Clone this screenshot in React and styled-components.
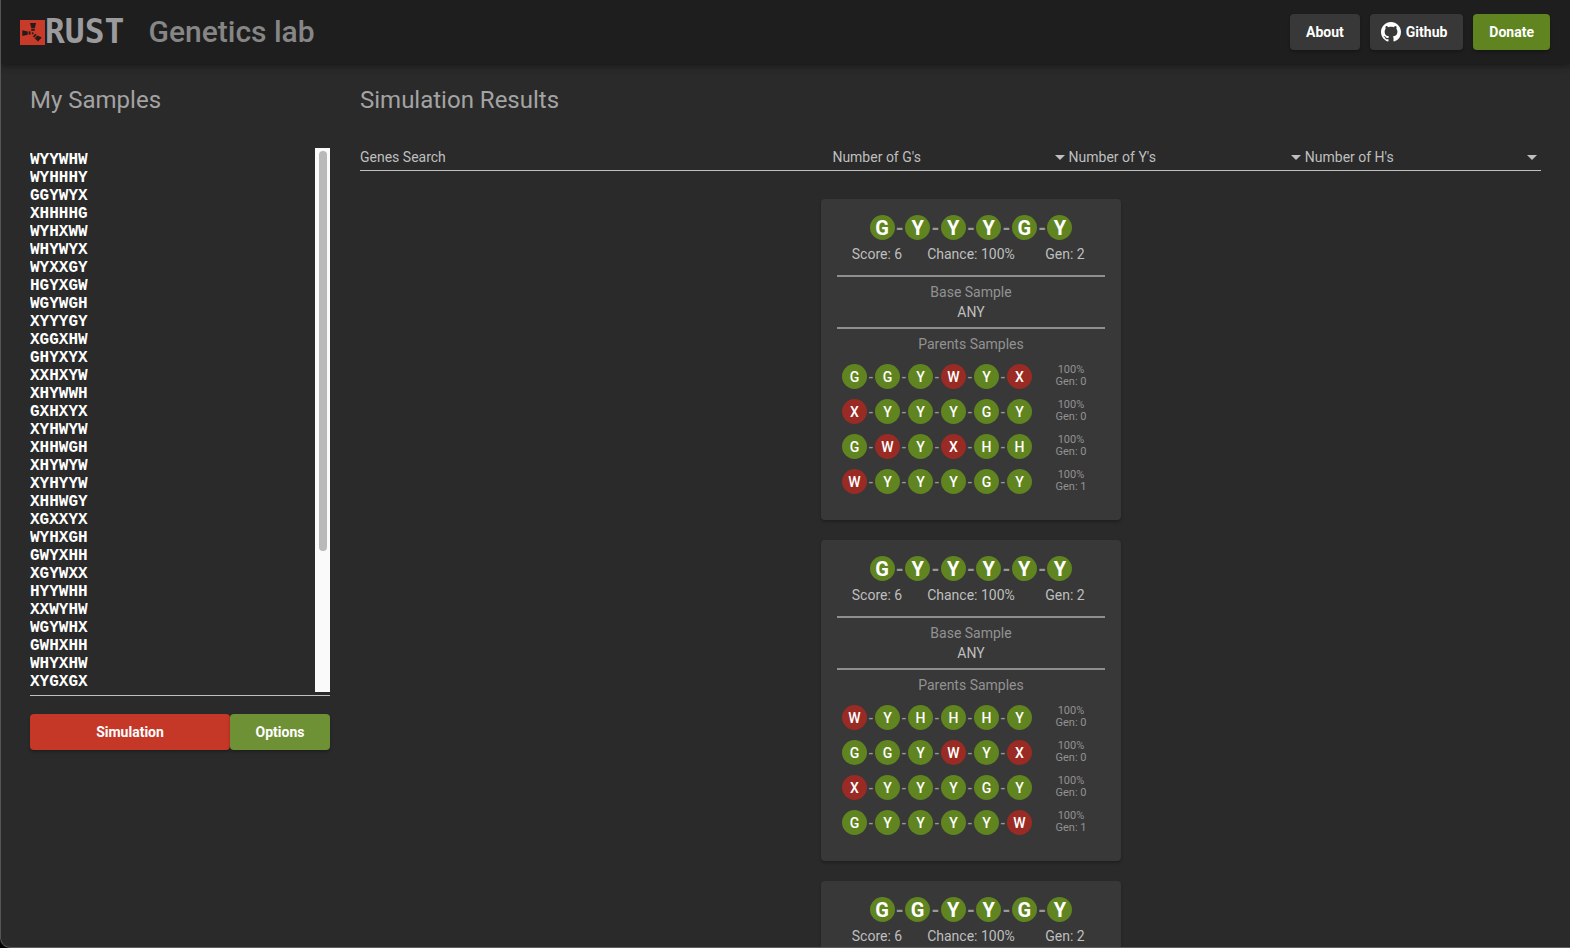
import React from "react";
import styled, { createGlobalStyle } from "styled-components";

const GlobalStyle = createGlobalStyle`
  *, *::before, *::after { box-sizing: border-box; }
  body {
    margin: 0;
    background: #000;
    color: #bfbfbf;
    font: 400 14px/20px Roboto, "Liberation Sans", sans-serif;
    -webkit-font-smoothing: antialiased;
  }
  button, input, select, textarea { font: inherit; color: inherit; }
  h1, h2, h3, p, ul, ol { margin: 0; padding: 0; }
`;

const Frame = styled.div`
  height: 100vh;
  display: flex;
  flex-direction: column;
  overflow: hidden;
  background: #2a2a2a;
  border-left: 1px solid #555;
  border-bottom: 1px solid #5c5c5c;
  border-bottom-left-radius: 10px;
`;

const Header = styled.header`
  flex: none;
  display: flex;
  align-items: center;
  height: 64px;
  padding: 0 20px 0 19px;
  background: #1e1e1e;
  box-shadow: 0 2px 4px -1px rgba(0, 0, 0, 0.2), 0 4px 5px rgba(0, 0, 0, 0.14),
    0 1px 10px rgba(0, 0, 0, 0.12);
  z-index: 1;
`;

const Brand = styled.a`
  display: flex;
  align-items: center;
  text-decoration: none;
`;

const Wordmark = styled.span`
  color: #9b9b9d;
  font: 700 33px/32px "DejaVu Sans Mono", monospace;
`;

const AppTitle = styled.h1`
  margin-left: 24px;
  color: #868686;
  font-size: 30px;
  font-weight: 500;
  line-height: 36px;
`;

const Nav = styled.nav`
  display: flex;
  gap: 10px;
  margin-left: auto;
`;

const tones = {
  dark: "#383838",
  green: "#608420",
  olive: "#6f9136",
  red: "#c53727",
};

const Button = styled.button`
  display: inline-flex;
  align-items: center;
  justify-content: center;
  gap: 5px;
  flex: ${(p) => p.$grow || "none"};
  height: 36px;
  padding: 0 ${(p) => (p.$withIcon ? 16 : p.$grow ? 0 : 16)}px 0 ${(p) => (p.$withIcon ? 11 : p.$grow ? 0 : 16)}px;
  border: 0;
  border-radius: 4px;
  background: ${(p) => tones[p.$tone]};
  color: #fff;
  font-weight: 700;
  text-decoration: none;
  box-shadow: 0 2px 3px rgba(0, 0, 0, 0.25);
  cursor: pointer;
`;

const Page = styled.div`
  flex: 1;
  min-height: 0;
  display: flex;
  gap: 30px;
  padding: 20px 29px 0 29px;
  overflow-y: auto;
  scrollbar-width: none;
`;

const Sidebar = styled.section`
  flex: 0 0 300px;
`;

const Results = styled.section`
  flex: 1;
  min-width: 0;
`;

const Heading = styled.h2`
  margin-bottom: 32px;
  color: #a3a3a3;
  font-size: 24px;
  font-weight: 400;
  line-height: 32px;
`;

const SampleField = styled.div`
  display: flex;
  height: 548px;
  padding-bottom: 3px;
  border-bottom: 1px solid #c0c0c0;
`;

const SampleInput = styled.textarea`
  flex: 1;
  min-width: 0;
  padding: 3px 0 0;
  border: 0;
  outline: 0;
  resize: none;
  background: transparent;
  color: #fff;
  font: 700 16px/18px "Liberation Mono", monospace;
  overflow-y: scroll;
  scrollbar-width: none;
`;

const ScrollTrack = styled.div`
  width: 15px;
  padding: 3px 3px 0 4px;
  background: #fafafa;
`;

const ScrollThumb = styled.div`
  height: 74%;
  border-radius: 4px;
  background: #b9b9b9;
`;

const Actions = styled.div`
  display: flex;
  margin-top: 18px;
`;

const Filters = styled.form`
  display: grid;
  grid-template-columns: 2fr 1fr 1fr 1fr;
`;

const Field = styled.label`
  display: flex;
  align-items: flex-start;
  height: 23px;
  padding-right: 4px;
  border-bottom: 1px solid #c0c0c0;
  color: #bfbfbf;

  svg { flex: none; margin-top: 7px; }
`;

const SearchInput = styled.input`
  width: 100%;
  height: 18px;
  padding: 0;
  border: 0;
  outline: 0;
  background: transparent;
  &::placeholder { color: #bfbfbf; opacity: 1; }
`;

const Select = styled.select`
  flex: 1;
  min-width: 0;
  height: 18px;
  padding: 0;
  margin: 0;
  border: 0;
  outline: 0;
  appearance: none;
  background: transparent;
  line-height: 18px;
`;

const CardList = styled.ul`
  display: flex;
  flex-direction: column;
  align-items: center;
  gap: 20px;
  margin-top: 28px;
  padding: 0 0 20px 41px;
  list-style: none;
`;

const Card = styled.li`
  width: 300px;
  padding: 16px 0 21px;
  border-radius: 4px;
  background: #383838;
  box-shadow: 0 2px 3px rgba(0, 0, 0, 0.25);
  text-align: center;
`;

const GeneRow = styled.div`
  display: flex;
  justify-content: space-between;
  align-items: center;
  width: ${(p) => (p.$large ? 203 : 190)}px;
  margin: ${(p) => (p.$large ? "0 auto" : "0")};
  color: #999;
  font-size: ${(p) => (p.$large ? 20 : 14)}px;
  font-weight: ${(p) => (p.$large ? 700 : 500)};
`;

const Gene = styled.span`
  display: grid;
  place-items: center;
  width: 25px;
  height: 25px;
  border-radius: 50%;
  background: ${(p) => (p.$bad ? "#992b24" : "#608420")};
  color: #fff;
  line-height: 26px;
`;

const Stats = styled.div`
  display: grid;
  grid-template-columns: repeat(3, 1fr);
  margin: 4px 9px 11px;
`;

const Block = styled.div`
  margin: 0 16px;
  padding: 5px 0;
  border-top: 2px solid #8f8f8f;
`;

const Caption = styled.h3`
  color: #929292;
  font-size: 14px;
  font-weight: 400;
  line-height: 20px;
`;

const ParentList = styled.ul`
  display: grid;
  gap: 10px;
  margin-top: 10px;
  list-style: none;
`;

const Parent = styled.li`
  display: flex;
  align-items: flex-start;
  height: 25px;
  padding-left: 5px;
`;

const ParentInfo = styled.p`
  width: 78px;
  color: #929292;
  font-size: 11px;
  line-height: 12px;
`;

const samples = `WYYWHW WYHHHY GGYWYX XHHHHG WYHXWW WHYWYX WYXXGY HGYXGW WGYWGH XYYYGY
XGGXHW GHYXYX XXHXYW XHYWWH GXHXYX XYHWYW XHHWGH XHYWYW XYHYYW XHHWGY XGXXYX WYHXGH
GWYXHH XGYWXX HYYWHH XXWYHW WGYWHX GWHXHH WHYXHW XYGXGX`.split(/\s+/);

const results = [
  { genes: "GYYYGY", parents: ["GGYWYX", "XYYYGY", "GWYXHH", "WYYYGY"] },
  { genes: "GYYYYY", parents: ["WYHHHY", "GGYWYX", "XYYYGY", "GYYYYW"] },
  { genes: "GGYYGY", parents: ["GGYWYX", "XYYYGY", "GWYXHH", "WGYYGY"] },
];

function Genes({ value, large }) {
  return (
    <GeneRow $large={large}>
      {value.split("").map((gene, i) => (
        <React.Fragment key={i}>
          {i > 0 && <span>-</span>}
          <Gene $bad={gene === "W" || gene === "X"}>{gene}</Gene>
        </React.Fragment>
      ))}
    </GeneRow>
  );
}

function ResultCard({ genes, parents }) {
  return (
    <Card>
      <Genes value={genes} large />
      <Stats>
        <span>Score: 6</span>
        <span>Chance: 100%</span>
        <span>Gen: 2</span>
      </Stats>
      <Block>
        <Caption>Base Sample</Caption>
        <p>ANY</p>
      </Block>
      <Block>
        <Caption>Parents Samples</Caption>
        <ParentList>
          {parents.map((parent, i) => (
            <Parent key={parent}>
              <Genes value={parent} />
              <ParentInfo>
                100%
                <br />
                Gen: {i === 3 ? 1 : 0}
              </ParentInfo>
            </Parent>
          ))}
        </ParentList>
      </Block>
    </Card>
  );
}

function RustMark() {
  return (
    <svg width="25" height="25" viewBox="0 0 25 25" aria-hidden="true">
      <path fill="#c93a29" d="M0 0h25v25H0z" />
      <g fill="#241c1b">
        <path d="M10 3h6l-1.2 5.2h-3.4z" />
        <path d="M11.2 9h3.6v1.8h-3.6z" />
        <path d="M2.3 10.2l5.4 1.2v3.4l-5.4 1.2z" />
        <path d="M8.6 11.4h1.9v3.2H8.6z" />
        <path d="M14.6 18.2l3-2.6 4.2 2-3.8 4z" />
        <path d="M12.9 16.4l2.4-2.6 1.4 1.2-2.6 2.5z" />
        <path d="M11.5 13.2l1.2-1.2 1.2 1.2-1.2 1.2z" />
      </g>
    </svg>
  );
}

function GithubMark() {
  return (
    <svg width="20" height="20" viewBox="0 0 16 16" fill="#fff" aria-hidden="true">
      <path d="M8 0C3.58 0 0 3.58 0 8c0 3.54 2.29 6.53 5.47 7.59.4.07.55-.17.55-.38 0-.19-.01-.82-.01-1.49-2.01.37-2.53-.49-2.69-.94-.09-.23-.48-.94-.82-1.13-.28-.15-.68-.52-.01-.53.63-.01 1.08.58 1.23.82.72 1.21 1.87.87 2.33.66.07-.52.28-.87.51-1.07-1.78-.2-3.64-.89-3.64-3.95 0-.87.31-1.59.82-2.15-.08-.2-.36-1.02.08-2.12 0 0 .67-.21 2.2.82.64-.18 1.32-.27 2-.27s1.36.09 2 .27c1.53-1.04 2.2-.82 2.2-.82.44 1.1.16 1.92.08 2.12.51.56.82 1.27.82 2.15 0 3.07-1.87 3.75-3.65 3.95.29.25.54.73.54 1.48 0 1.07-.01 1.93-.01 2.2 0 .21.15.46.55.38A8.01 8.01 0 0 0 16 8c0-4.42-3.58-8-8-8z" />
    </svg>
  );
}

function NumberFilter({ gene }) {
  const title = `Number of ${gene}'s`;
  return (
    <Field>
      <Select aria-label={title} defaultValue="">
        <option value="">{title}</option>
        {[0, 1, 2, 3, 4, 5, 6].map((n) => (
          <option key={n} value={n}>{n}</option>
        ))}
      </Select>
      <svg width="10" height="5" viewBox="0 0 10 5" aria-hidden="true">
        <path d="M0 0h10L5 5z" fill="#bfbfbf" />
      </svg>
    </Field>
  );
}

export default function App() {
  return (
    <Frame>
      <GlobalStyle />
      <Header>
        <Brand href="#">
          <RustMark />
          <Wordmark>RUST</Wordmark>
        </Brand>
        <AppTitle>Genetics lab</AppTitle>
        <Nav>
          <Button type="button" $tone="dark">About</Button>
          <Button as="a" href="#github" $tone="dark" $withIcon>
            <GithubMark />
            Github
          </Button>
          <Button type="button" $tone="green">Donate</Button>
        </Nav>
      </Header>
      <Page>
        <Sidebar>
          <Heading id="samples-heading">My Samples</Heading>
          <SampleField>
            <SampleInput
              aria-labelledby="samples-heading"
              spellCheck={false}
              defaultValue={samples.join("\n")}
            />
            <ScrollTrack aria-hidden="true">
              <ScrollThumb />
            </ScrollTrack>
          </SampleField>
          <Actions>
            <Button type="button" $tone="red" $grow="2">Simulation</Button>
            <Button type="button" $tone="olive" $grow="1">Options</Button>
          </Actions>
        </Sidebar>
        <Results>
          <Heading>Simulation Results</Heading>
          <Filters>
            <Field>
              <SearchInput type="text" aria-label="Genes Search" placeholder="Genes Search" />
            </Field>
            <NumberFilter gene="G" />
            <NumberFilter gene="Y" />
            <NumberFilter gene="H" />
          </Filters>
          <CardList>
            {results.map((result) => (
              <ResultCard key={result.genes} {...result} />
            ))}
          </CardList>
        </Results>
      </Page>
    </Frame>
  );
}
